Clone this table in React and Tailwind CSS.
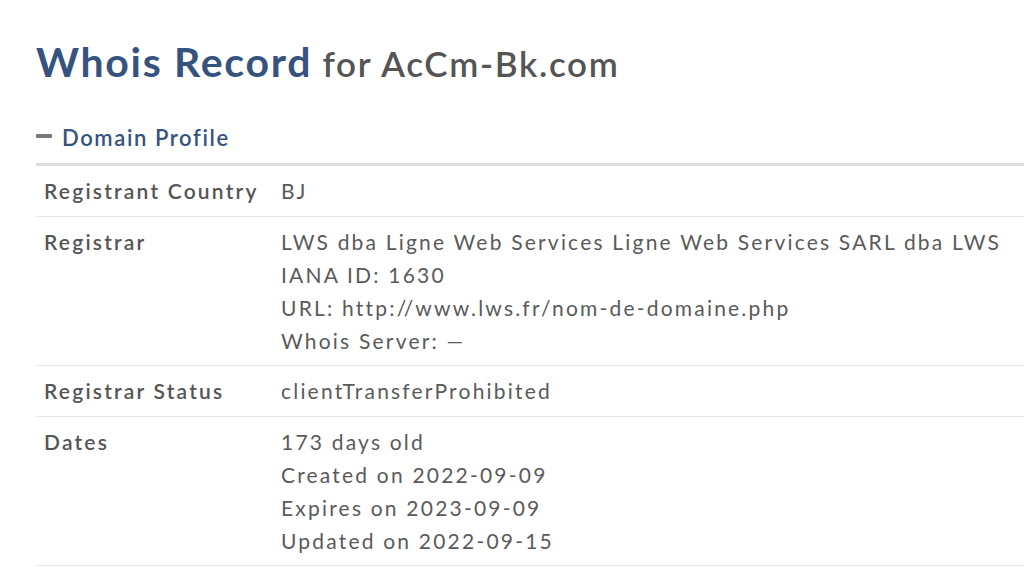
export default function App() {
  const rows = [
    { label: "Registrant Country", lines: ["BJ"] },
    {
      label: "Registrar",
      lines: [
        "LWS dba Ligne Web Services Ligne Web Services SARL dba LWS",
        "IANA ID: 1630",
        "URL: http://www.lws.fr/nom-de-domaine.php",
        "Whois Server: \u2014",
      ],
    },
    { label: "Registrar Status", lines: ["clientTransferProhibited"] },
    {
      label: "Dates",
      lines: [
        "173 days old",
        "Created on 2022-09-09",
        "Expires on 2023-09-09",
        "Updated on 2022-09-15",
      ],
    },
  ];
  return (
    <div
      className="w-[1024px] h-[568px] overflow-hidden bg-white pl-[36px]"
      style={{ fontFamily: "Lato, 'Open Sans', sans-serif" }}
    >
      <h1 className="pt-[36px] text-[41px] leading-[52px] whitespace-nowrap">
        <span className="font-bold text-[#36537f] tracking-[1.7px]">Whois Record</span>
        <span className="text-[35px] font-semibold text-[#555555] tracking-[1.7px]"> for AcCm-Bk.com</span>
      </h1>
      <div className="mt-[33px] flex items-center h-[30px]">
        <span className="block w-[16px] h-[4px] bg-[#7a7a7a] rounded-[1px] mr-[10px] mt-[-2px]"></span>
        <span className="text-[22px] font-semibold text-[#36537f] tracking-[1.6px]">Domain Profile</span>
      </div>
      <div className="mt-[11px] border-t-[3px] border-[#dcdcdc]">
        {rows.map((r) => (
          <div key={r.label} className="flex border-b border-[#e6e6e6] pt-[8px] pb-[8.5px]">
            <div className="w-[245px] pl-[8px] shrink-0 text-[21px] leading-[33px] font-semibold text-[#555555] tracking-[2.2px] whitespace-nowrap">
              {r.label}
            </div>
            <div className="text-[21px] leading-[33px] text-[#5a5a5a] tracking-[2.2px] whitespace-nowrap">
              {r.lines.map((l) => (
                <div key={l}>{l}</div>
              ))}
            </div>
          </div>
        ))}
      </div>
    </div>
  );
}
